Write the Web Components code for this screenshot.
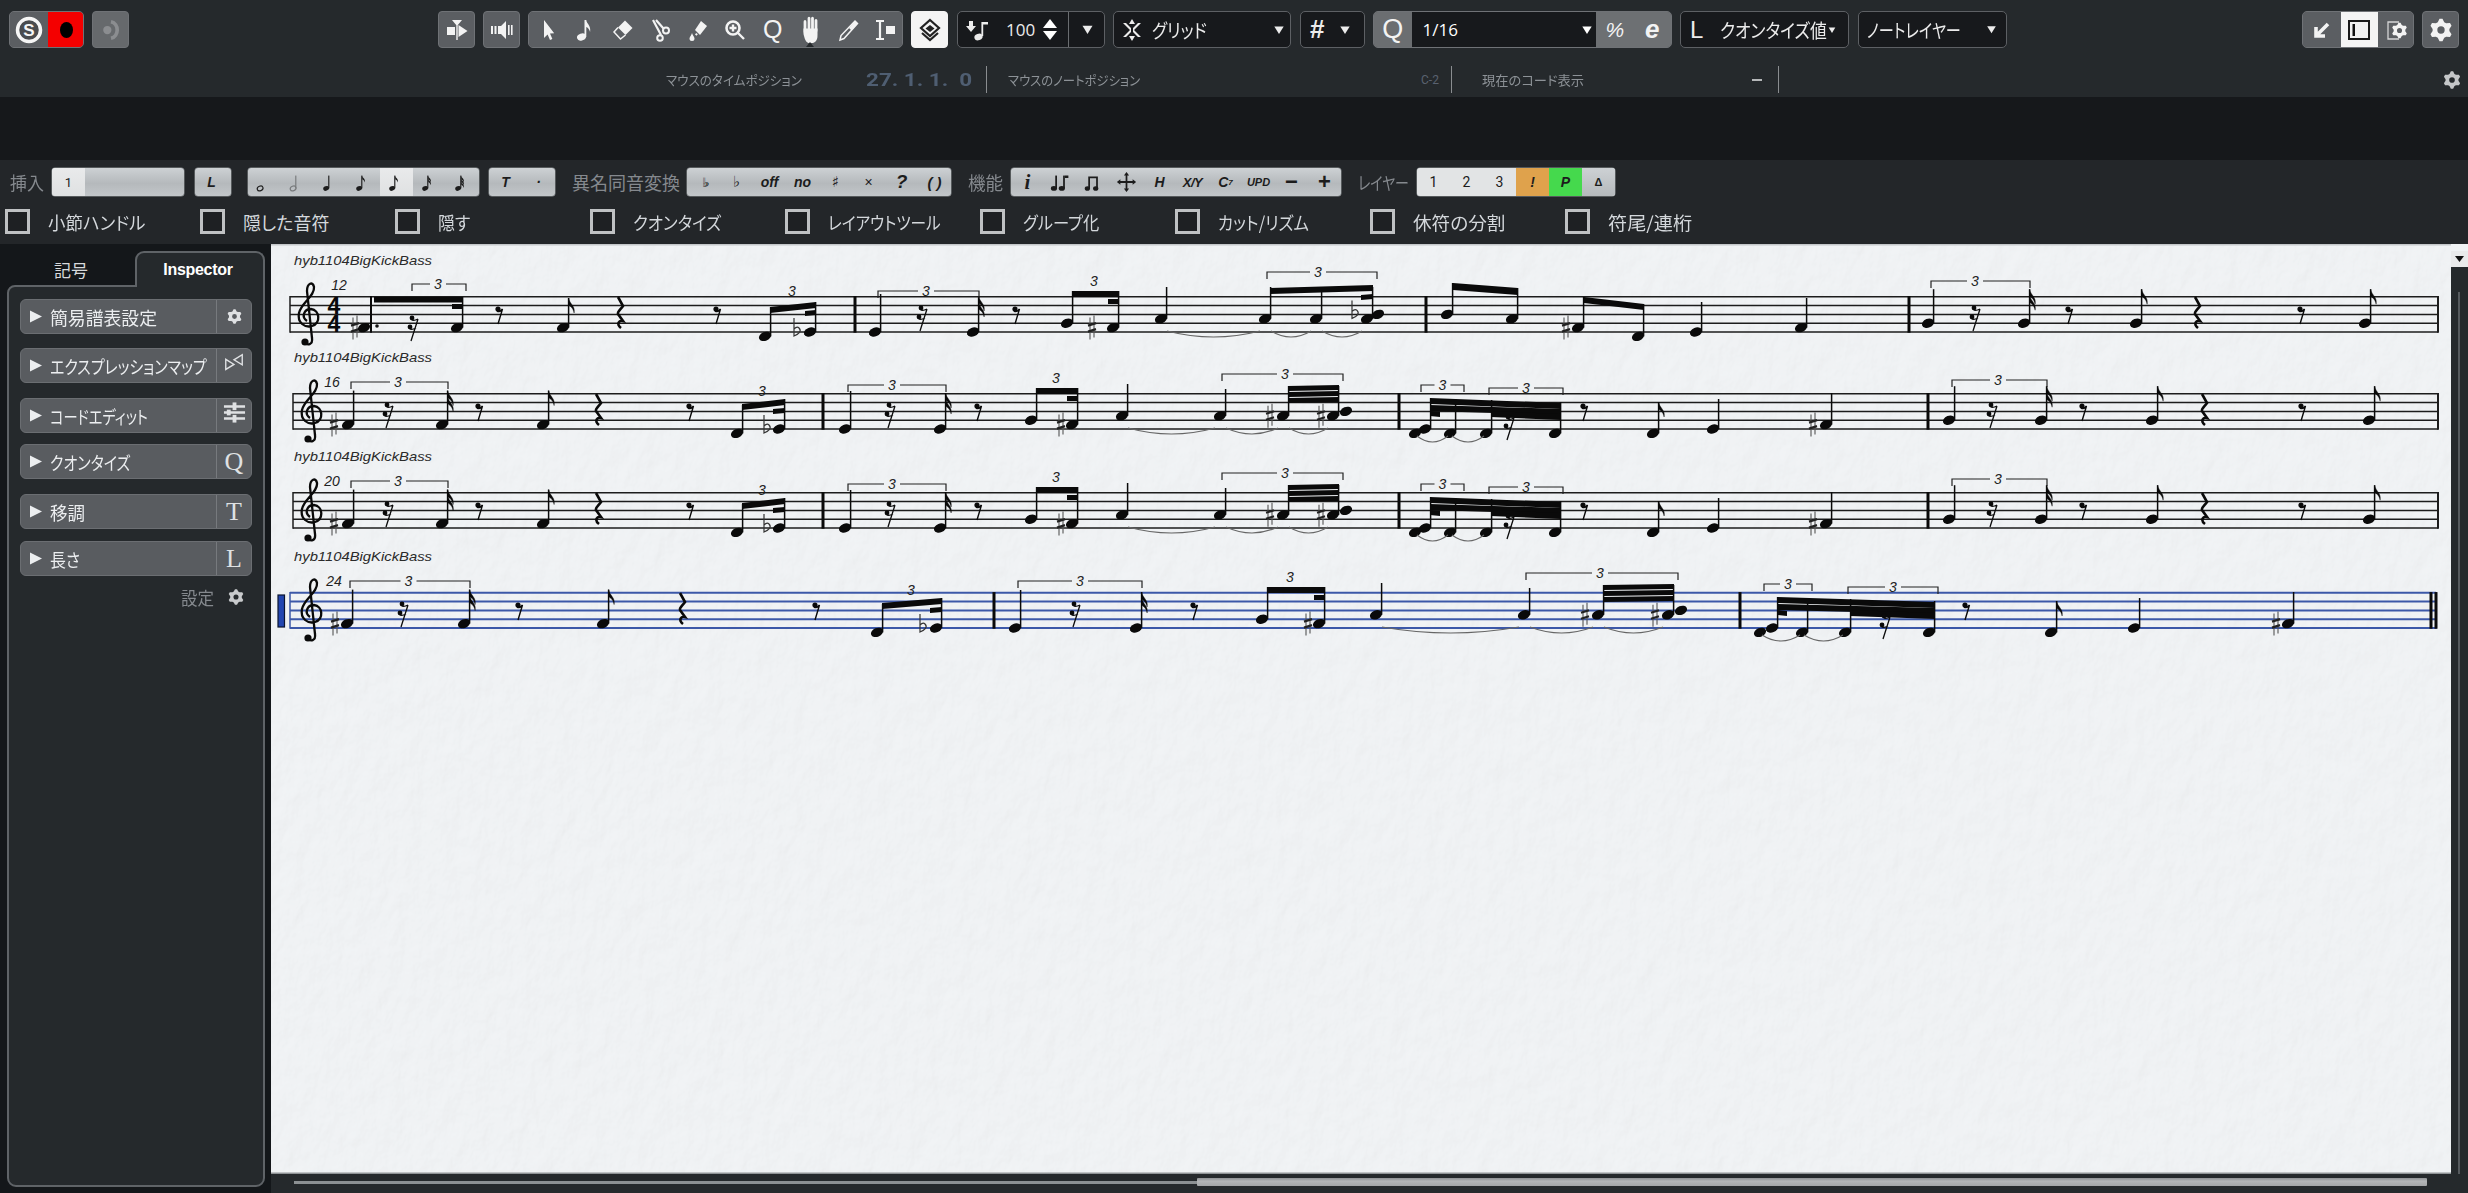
<!DOCTYPE html>
<html lang="ja"><head><meta charset="utf-8"><title>Score</title>
<style>html,body{margin:0;padding:0;background:#14171a;overflow:hidden}</style></head>
<body><score-app></score-app>
<script>
const JP='"Noto Sans CJK JP","Noto Sans",sans-serif';
const LAT='"Liberation Sans","Noto Sans CJK JP",sans-serif';
function gearPath(c,R,r,h,n=6){let d='';const N=n*4;for(let i=0;i<N;i++){const a=(i-.5)/N*2*Math.PI-Math.PI/2;const rad=(i%4<2)?R:r;d+=(i?'L':'M')+(c+rad*Math.cos(a)).toFixed(2)+' '+(c+rad*Math.sin(a)).toFixed(2);}
d+='Z M'+(c-h)+' '+c+'a'+h+' '+h+' 0 1 0 '+2*h+' 0a'+h+' '+h+' 0 1 0 '+(-2*h)+' 0Z';return d;}
const gear=`<path fill-rule="evenodd" d="${gearPath(12,10.5,7.8,3.4)}"/>`;
const noteI=(fl,filled=true,stem=true)=>{let s=`<ellipse cx="7" cy="19" rx="3.4" ry="2.5" transform="rotate(-20 7 19)" ${filled?'':'fill="none" stroke="currentColor" stroke-width="1.3"'}/>`;if(stem)s+=`<rect x="9.4" y="5" width="1.3" height="14"/>`;for(let i=0;i<fl;i++)s+=`<path d="M10.5 ${5+i*3}c.5 3 4 3.5 3 7.5c-.6-2.5-2-3-3-3.6z"/>`;return s;};
const ICONS={
 pointer:'<path d="M8 2v18l3.6-3.6L14 22l2.4-1-2.4-5.4 4.2-.3z"/>',
 note:'<ellipse cx="8.5" cy="19" rx="4.6" ry="3.4" transform="rotate(-20 8.5 19)"/><path d="M11.5 2h1.8c.4 4 5 5.5 3.8 12-.8-3-2.6-4.5-3.8-5v10h-1.8z"/>',
 eraser:'<path d="M14 2.5l7.5 7.5-7 7-7.500-7.500z"/><path d="M7 9.500l-4 4.500 6.500 7 5-4" fill="none" stroke="currentColor" stroke-width="1.500"/>',
 scissors:'<circle cx="18" cy="12.500" r="3" fill="none" stroke="currentColor" stroke-width="2"/><circle cx="12" cy="20" r="2.800" fill="none" stroke="currentColor" stroke-width="2"/><path d="M5 2l8 15M15.500 10.500 8 2" fill="none" stroke="currentColor" stroke-width="2.200"/>',
 glue:'<path d="M15 3l6 5-7 9-5-5z"/><path d="M6 15c-1 3-2.500 4-2.500 5.500a2.500 2.500 0 0 0 5 0C8.500 19 7 18 6 15z"/><rect x="9.500" y="15" width="2" height="2" transform="rotate(40 10 16)"/>',
 zoom:'<circle cx="10" cy="10" r="6.500" fill="none" stroke="currentColor" stroke-width="2.600"/><path d="M10 6.500v7M6.500 10h7M15 15l6 6" stroke="currentColor" stroke-width="2.400" fill="none"/>',
 hand:'<path d="M7 5v9M11 2v9M14.500 2v9M18 4v9" stroke="currentColor" stroke-width="2.800" stroke-linecap="round" fill="none"/><path d="M5.500 11h14v6c0 4-2 7-6 7h-2c-3 0-4.500-2-6-8z"/>',
 pencil:'<path d="M19 3l2.500 2.500L8 20.500 4 22l1-4.500z" fill="none" stroke="currentColor" stroke-width="1.500"/><path d="M19 3l2.500 2.500-6 7-2.500-2.500z"/>',
 ibar:'<path d="M3 3h8M3 21h8M7 3v18" stroke="currentColor" stroke-width="2.200" fill="none"/><rect x="13" y="8" width="9" height="8"/>',
 layers:'<path d="M12 2l9 8-9 8-9-8z" fill="none" stroke="currentColor" stroke-width="2.200"/><path d="M12 7l4.500 3.500-4.500 3.500-4.500-3.500z"/><path d="M4 15l8 7 8-7" fill="none" stroke="currentColor" stroke-width="2.200"/>',
 thru:'<path d="M7 2h10L12 8zM11.300 6h1.400v16h-1.400z"/><rect x="2" y="9" width="8" height="8"/><path d="M13.500 7l9 6-9 6z"/>',
 speak:'<rect x="1" y="8" width="2" height="8"/><rect x="4.500" y="8" width="2" height="8"/><path d="M8 8h3l5-5v18l-5-5H8z"/><rect x="18" y="7" width="1.600" height="10"/><rect x="21" y="7" width="1.600" height="10"/>',
 mon:'<circle cx="8" cy="12" r="4.500"/><path d="M12 3c9 2 9 16 0 18" fill="none" stroke="currentColor" stroke-width="4"/>',
 ins:'<path d="M3 3h4v5h3l-5 6-5-6h3z"/><ellipse cx="12.500" cy="19" rx="4.200" ry="3.200" transform="rotate(-20 12.500 19)"/><rect x="15.400" y="4" width="1.800" height="14"/><path d="M17 4h5v2.500h-5z"/>',
 grid:'<path d="M3 5l7 7-7 7 3 0 5-5v-4L6 5zM21 5l-7 7 7 7-3 0-5-5v-4l5-5z" /><path d="M12 1l3 5h-6zM12 23l-3-5h6z"/>',
 back:'<path d="M18 6L7 17M6 9v9h9" fill="none" stroke="currentColor" stroke-width="3.600"/>',
 panel:'<rect x="2" y="3" width="20" height="18" fill="#f2f2f2" stroke="#1a1a1a" stroke-width="2"/><rect x="5.500" y="6" width="2.500" height="12" fill="#111"/>',
 docgear:`<path d="M14 4H3v17h11" fill="none" stroke="currentColor" stroke-width="1.300" opacity=".8"/><g transform="translate(5.500 3.500) scale(.75)">${gear}</g>`,
 gear,
 tie:'<path d="M3 8v11l9-5.500zM21 3v11l-9-5.500z" fill="none" stroke="currentColor" stroke-width="1.500"/>',
 sliders:'<path d="M1 4.500h22v2.600H1zM1 10.700h22v2.600H1zM1 16.900h22v2.600H1z"/><rect x="10" y="1.500" width="4" height="8" /><rect x="10" y="14.500" width="4" height="8"/><rect x="4" y="9" width="4" height="6"/>',
 move:'<path d="M12 1l3 4h-2v6h6V9l4 3-4 3v-2h-6v6h2l-3 4-3-4h2v-6H5v2l-4-3 4-3v2h6V5H9z"/>',
 nn2:'<rect x="6" y="5" width="2" height="14"/><ellipse cx="4.500" cy="19" rx="3.500" ry="2.600"/><rect x="15" y="5" width="2" height="14"/><path d="M17 5h4v2.500h-4z"/><ellipse cx="13.500" cy="19" rx="3.500" ry="2.600"/>',
 nn3:'<path d="M6 6h11v2H8v11H6zM15 6h2v13h-2z"/><ellipse cx="5" cy="19" rx="3" ry="2.500"/><ellipse cx="14.500" cy="19" rx="3" ry="2.500"/>',
 n0:noteI(0,false,false),n1:noteI(0,false),n2:noteI(0),n3:noteI(1),n4:noteI(2),n5:noteI(3),n6:noteI(4),
 tri:'<path d="M0 1l24 11L0 23z"/>',
 down:'<path d="M4 6h16l-8 13z"/>'
};
const fits=new Set();
class FitT extends HTMLElement{
 connectedCallback(){if(!this.shadowRoot){const r=this.attachShadow({mode:'open'});r.innerHTML=`<style>:host{display:inline-block;white-space:nowrap;line-height:1;vertical-align:middle;font-feature-settings:"palt"}span{display:inline-block;transform-origin:left center}</style><span><slot></slot></span>`;}fits.add(this);this.fit();}
 fit(){const s=this.shadowRoot.querySelector('span');s.style.transform='';const w=+this.getAttribute('w');this.style.width=w+'px';const n=s.offsetWidth;if(n>0)s.style.transform=`scaleX(${w/n})`;}
}
customElements.define('fit-t',FitT);
function def(tag,css,html){customElements.define(tag,class extends HTMLElement{connectedCallback(){if(this.shadowRoot)return;const r=this.attachShadow({mode:'open'});r.innerHTML=`<style>${css}</style>`+(typeof html==='function'?html(this):html);}});}
def('ui-icon',':host{display:inline-flex;line-height:0}svg{fill:currentColor;display:block}',e=>{const s=e.getAttribute('s')||24;const h=e.getAttribute('h')||s;return `<svg width="${s}" height="${h}" viewBox="0 0 24 24" preserveAspectRatio="none">${ICONS[e.getAttribute('n')]}</svg>`});
def('tb-btn',`:host{display:inline-flex;align-items:center;justify-content:center;box-sizing:border-box;width:37px;height:37px;background:#5b5e62;color:#f3f3f3;border:1px solid #6f7276;border-radius:4px;font:400 25px ${LAT};flex:none;position:relative}
 :host([v=white]){background:#f4f4f4;color:#222;border-color:#f4f4f4}:host([v=red]){background:#f40000;color:#000;border-color:#f40000}:host([g]){border:0;border-radius:0;width:37.500px;height:35px}:host([v=mute]){color:#8b8d90}
 :host([notch])::after{content:"";position:absolute;left:50%;bottom:0;margin-left:-4px;border:4px solid transparent;border-top:0;border-bottom:5px solid #25292c}`,'<slot></slot>');
def('tb-group',':host{display:inline-flex;box-sizing:border-box;height:37px;border:1px solid #6f7276;border-radius:5px;overflow:hidden;background:#5b5e62;flex:none;position:relative}','<slot></slot>');
def('tb-sel',`:host{display:inline-flex;align-items:center;box-sizing:border-box;height:37px;background:#17191c;color:#ececec;border:1px solid #5d6064;border-radius:5px;font:400 19px ${JP};flex:none;position:relative}`,'<slot></slot>');
def('tool-cell',`:host{display:inline-flex;align-items:center;justify-content:center;width:33px;height:28px;color:#1c1c1c;font:italic 700 14px ${LAT};flex:none}
 :host([v=hi]){background:linear-gradient(#e9eaeb,#dfe1e2)}:host([v=or]){background:#dfa24c}:host([v=gr]){background:#45d94d}`,'<slot></slot>');
def('tool-group',':host{display:inline-flex;height:28px;border-radius:3px;overflow:hidden;background:linear-gradient(#cdd1d4,#b5b9bc 55%,#c2c6c9);box-shadow:0 0 0 .5px #8a8d90;flex:none}','<slot></slot>');
def('chk-item',`:host{display:flex;align-items:center;color:#d4d8dc;font:400 18px ${JP}}i{box-sizing:border-box;width:25px;height:25px;border:3px solid #bfc1c3;background:#1e2023;margin-right:18px;flex:none}`,'<i></i><slot></slot>');
def('insp-item',`:host{display:flex;align-items:center;box-sizing:border-box;width:232px;height:35px;background:#595c60;border:1px solid #6b6e72;border-radius:6px;color:#eceef0;font:400 18px ${JP};flex:none}
 .t{display:flex;width:12px;margin:0 8px 0 9px}.l{flex:1;min-width:0;white-space:nowrap;display:flex;align-items:center;height:100%}.r{box-sizing:border-box;width:35px;height:100%;border-left:1px solid #777a7e;display:flex;align-items:center;justify-content:center;font:400 26px "Liberation Serif",serif;color:#dfe1e3}`,`<span class="t"><ui-icon n="tri" s="12" h="13"></ui-icon></span><span class="l"><slot></slot></span><span class="r"><slot name="r"></slot></span>`);

def('top-bar',`:host{display:flex;align-items:flex-start;box-sizing:border-box;height:66px;padding:11px 0 0 9px;background:#25292c;color:#fff}
 .m{margin-left:8px}tb-sel{padding-left:0}.w{font:400 22px ${LAT}}`,`
 <tb-group style="width:75px"><tb-btn g style="color:#fff;width:38px"><ui-icon-s></ui-icon-s></tb-btn><tb-btn g v="red" style="width:37px"><svg width="15" height="22" viewBox="0 0 14 22"><ellipse cx="7" cy="11" rx="6.500" ry="8"/></svg></tb-btn></tb-group>
 <tb-btn v="mute" class="m" style="background:#66696c"><ui-icon n="mon" s="22"></ui-icon></tb-btn>
 <tb-btn style="margin-left:309px"><ui-icon n="thru"></ui-icon></tb-btn>
 <tb-btn class="m"><ui-icon n="speak"></ui-icon></tb-btn>
 <tb-group class="m" style="width:375px">
  <tb-btn g><ui-icon n="pointer"></ui-icon></tb-btn><tb-btn g><ui-icon n="note"></ui-icon></tb-btn><tb-btn g><ui-icon n="eraser"></ui-icon></tb-btn><tb-btn g><ui-icon n="scissors"></ui-icon></tb-btn><tb-btn g><ui-icon n="glue"></ui-icon></tb-btn><tb-btn g><ui-icon n="zoom"></ui-icon></tb-btn><tb-btn g>Q</tb-btn><tb-btn g notch><ui-icon n="hand" s="24" h="27"></ui-icon></tb-btn><tb-btn g><ui-icon n="pencil"></ui-icon></tb-btn><tb-btn g><ui-icon n="ibar"></ui-icon></tb-btn>
 </tb-group>
 <tb-btn v="white" class="m"><ui-icon n="layers"></ui-icon></tb-btn>
 <tb-sel style="width:148px;margin-left:9px"><ui-icon n="ins" s="24" style="margin-left:8px"></ui-icon><span style="font:400 17px 'Open Sans',sans-serif;margin-left:16px;width:30px">100</span><span style="margin-left:7px;display:flex;flex-direction:column;gap:3px"><svg width="14" height="9" viewBox="0 0 14 9" fill="#fff"><path d="M7 0l7 9H0z"/></svg><svg width="14" height="9" viewBox="0 0 14 9" fill="#fff"><path d="M7 9L0 0h14z"/></svg></span><span style="margin-left:11px;width:1px;height:35px;background:#6a6d70"></span><ui-icon n="down" s="15" style="margin-left:11px"></ui-icon></tb-sel>
 <tb-sel class="m" style="width:178px"><ui-icon n="grid" s="24" style="margin-left:6px"></ui-icon><fit-t w="55" style="margin-left:8px">グリッド</fit-t><ui-icon n="down" s="14" style="margin-left:65px"></ui-icon></tb-sel>
 <tb-sel style="width:65px;margin-left:9px"><span class="w" style="margin-left:9px;font:700 26px 'Liberation Sans',sans-serif;width:25px">#</span><ui-icon n="down" s="14" style="margin-left:3px"></ui-icon></tb-sel>
 <tb-group class="m" style="width:299px;background:#5b5e62"><tb-btn g style="background:#6b6e71;font-size:27px">Q</tb-btn><span style="flex:1;background:#17191c;display:flex;align-items:center;font:400 17px 'Open Sans',sans-serif"><span style="margin-left:11px;width:157px">1/16</span><ui-icon n="down" s="14"></ui-icon></span><tb-btn g style="background:#6d7073;font:italic 400 21px 'Liberation Sans',sans-serif">%</tb-btn><tb-btn g style="background:#6d7073;font:italic 700 26px 'Liberation Sans',sans-serif">e</tb-btn></tb-group>
 <tb-sel class="m" style="width:169px"><span class="w" style="margin-left:9px;width:30px;font-size:24px">L</span><fit-t w="107">クオンタイズ値</fit-t><ui-icon n="down" s="10"></ui-icon></tb-sel>
 <tb-sel style="width:149px;margin-left:9px"><fit-t w="94" style="margin-left:8px">ノートレイヤー</fit-t><ui-icon n="down" s="13" style="margin-left:24px"></ui-icon></tb-sel>
 <tb-group style="width:112px;margin-left:295px"><tb-btn g><ui-icon n="back"></ui-icon></tb-btn><tb-btn g v="white"><ui-icon n="panel"></ui-icon></tb-btn><tb-btn g><ui-icon n="docgear"></ui-icon></tb-btn></tb-group>
 <tb-btn class="m"><ui-icon n="gear" s="26"></ui-icon></tb-btn>`);
def('ui-icon-s',':host{display:inline-flex}',`<svg width="28" height="28" viewBox="0 0 28 28"><circle cx="14" cy="14" r="11.500" fill="#4a4c4f" stroke="#f6f6f6" stroke-width="3.500"/><text x="14" y="20" text-anchor="middle" font-family="Liberation Sans" font-weight="700" font-size="17" fill="#f6f6f6">S</text></svg>`);
def('info-bar',`:host{display:flex;align-items:center;box-sizing:border-box;height:31px;padding:0 6px 4px 0;background:#25292c;color:#8d9297;font:400 13px ${JP}}
 fit-t.v{font:700 18px "Roboto",sans-serif;color:#4f5e72;white-space:pre}b{font:400 12px Roboto,sans-serif;color:#5a6270;flex:none;width:22px}i{width:1px;height:27px;background:#8a8d90;flex:none;display:block}`,`
 <fit-t w="136" style="margin-left:666px">マウスのタイムポジション</fit-t><fit-t class="v" w="106" style="margin-left:64px;white-space:pre">27. 1. 1.  0</fit-t><i style="margin-left:14px"></i>
 <fit-t w="132" style="margin-left:21px">マウスのノートポジション</fit-t><b style="margin-left:281px">C-2</b><i style="margin-left:8px"></i>
 <fit-t w="102" style="margin-left:30px">現在のコード表示</fit-t><span style="margin-left:168px;width:10px;height:2px;background:#b5b7b9"></span><i style="margin-left:16px"></i>
 <ui-icon n="gear" s="20" style="margin-left:auto;color:#c4c6c8"></ui-icon>`);
const C=(s,v='')=>`<tool-cell ${v}>${s}</tool-cell>`;
const I=n=>`<ui-icon n="${n}" s="21" h="22"></ui-icon>`;
const sym=(s,x='')=>`<span style="font:400 15px 'DejaVu Sans',sans-serif;${x}">${s}</span>`;
def('tools-row',`:host{display:flex;align-items:flex-start;box-sizing:border-box;height:45px;padding-top:8px;background:#232629;color:#85898e;font:400 18px ${JP}}fit-t{line-height:28px;height:28px}`,`
 <fit-t w="34" style="margin-left:10px">挿入</fit-t>
 <tool-group style="margin-left:8px;width:132px">${C('<span style="font:400 13px Roboto">1</span>','v=hi')}</tool-group>
 <tool-group style="margin-left:11px;width:36px">${C('L')}</tool-group>
 <tool-group style="margin-left:17px">${C(I('n0'))}${C('<span style="color:#77797b;display:inline-flex">'+I('n1')+'</span>')}${C(I('n2'))}${C(I('n3'))}${C(I('n3'),'v=hi')}${C(I('n4'))}${C(I('n5'))}</tool-group>
 <tool-group style="margin-left:10px">${C('T')}${C('·')}</tool-group>
 <fit-t w="108" style="margin-left:17px">異名同音変換</fit-t>
 <tool-group style="margin-left:7px">${C(sym('♭♭','letter-spacing:-5px;font-size:13px'))}${C(sym('♭'))}${C('off')}${C('no')}${C(sym('♯'))}${C('<span style="font-style:normal;font-weight:400">×</span>')}${C('<span style="font-size:19px">?</span>')}${C('<span style="font-size:15px">( )</span>')}</tool-group>
 <fit-t w="35" style="margin-left:17px">機能</fit-t>
 <tool-group style="margin-left:8px">${C('<span style="font:italic 700 21px \'Liberation Serif\',serif">i</span>')}${C(I('nn2'))}${C(I('nn3'))}${C(I('move'))}${C('H')}${C('<span style="letter-spacing:-.5px;font-size:13px">X/Y</span>')}${C('C<sup style="font-size:8px">7</sup>')}${C('<span style="font-size:11px">UPD</span>')}${C('<span style="font-size:22px;font-style:normal">−</span>')}${C('<span style="font-size:22px;font-style:normal">+</span>')}</tool-group>
 <fit-t w="51" style="margin-left:17px">レイヤー</fit-t>
 <tool-group style="margin-left:8px;background:#e2e4e5">${C('<span style="font:400 14px Roboto">1</span>')}${C('<span style="font:400 14px Roboto">2</span>')}${C('<span style="font:400 14px Roboto">3</span>')}${C('!','v=or')}${C('P','v=gr')}${C('<span style="font-style:normal;font-size:11px">Δ</span>','style="background:linear-gradient(#cdd1d4,#b5b9bc)"')}</tool-group>`);
const CK=[['小節ハンドル',97],['隠した音符',86],['隠す',32],['クオンタイズ',88],['レイアウトツール',113],['グループ化',76],['カット/リズム',91],['休符の分割',92],['符尾/連桁',84]];
def('check-row',`:host{display:grid;grid-template-columns:repeat(9,195px);box-sizing:border-box;height:39px;padding:4px 0 0 5px;background:#232629;align-items:start}`,CK.map(c=>`<chk-item><fit-t w="${c[1]}">${c[0]}</fit-t></chk-item>`).join(''));
const IT=[['簡易譜表設定',107,'<ui-icon n="gear" s="17"></ui-icon>',14],['エクスプレッションマップ',157,'<ui-icon n="tie" s="22"></ui-icon>',15],['コードエディット',98,'<ui-icon n="sliders" s="23"></ui-icon>',11],['クオンタイズ',80,'Q',15],['移調',35,'T',12],['長さ',30,'L',12]];
def('insp-panel',`:host{display:flex;flex-direction:column;box-sizing:border-box;width:271px;height:949px;padding:7px 6px 6px 7px;background:#14171a;color:#e8eaec}
 .tabs{display:flex;height:34px;position:relative;z-index:1}.a{width:128px;text-align:center;font:400 17px ${JP};line-height:38px;color:#d8dadc}.b{box-sizing:border-box;width:130px;height:36px;border:2px solid #5f6367;border-bottom:0;border-radius:9px 9px 0 0;background:#25292c;text-align:center;font:700 16px ${LAT};line-height:34px;letter-spacing:-.3px;color:#fff;padding-right:4px}
 .body{flex:1;box-sizing:border-box;border:2px solid #5f6367;border-radius:8px 0 9px 9px;background:#25292c;padding:12px 11px 0 11px;display:flex;flex-direction:column}
 .set{display:flex;align-items:center;justify-content:flex-end;color:#85898e;font:400 18px ${JP};padding-right:7px;gap:13px}`,`
 <div class="tabs"><div class="a">記号</div><div class="b">Inspector</div></div>
 <div class="body">${IT.map(i=>`<insp-item style="margin-bottom:${i[3]}px"><fit-t w="${i[1]}">${i[0]}</fit-t><span slot="r">${i[2]}</span></insp-item>`).join('')}
 <div class="set"><fit-t w="33">設定</fit-t><ui-icon n="gear" s="18" style="color:#c8cacc"></ui-icon></div></div>`);

function drawScore(){
 let o='';const L=8.8;
 const sys=(b)=>{const ink='#0a0a0a';
 const py=p=>b-p*4.4;
 const api={
  staff(x1,x2,c='#1c1c1c',w=1.5){for(let i=0;i<5;i++)o+=`<line x1="${x1}" x2="${x2}" y1="${b-i*L}" y2="${b-i*L}" stroke="${c}" stroke-width="${w}"/>`;o+=`<line x1="${x1}" x2="${x1}" y1="${b-4*L-.7}" y2="${b+.7}" stroke="${c}" stroke-width="1.5"/><line x1="${x2}" x2="${x2}" y1="${b-4*L-.7}" y2="${b+.7}" stroke="${c}" stroke-width="2"/>`;},
  head(x,p){o+=`<ellipse cx="${x}" cy="${py(p)}" rx="6.3" ry="4.4" transform="rotate(-22 ${x} ${py(p)})" fill="${ink}"/>`;},
  note(x,p,up,fl=0){api.head(x,p);const s=x+5.6,t=b-up;o+=`<line x1="${s}" x2="${s}" y1="${py(p)}" y2="${t}" stroke="${ink}" stroke-width="1.5"/>`;for(let i=0;i<fl;i++)o+=`<path d="M${s} ${t+i*6}c1 6 7 8 5.5 15c-1-5-3-6-5.5-8z" fill="${ink}" stroke="${ink}" stroke-width=".4"/>`;},
  r8(x){o+=`<circle cx="${x-2}" cy="${b-23}" r="2.6" fill="${ink}"/><path d="M${x-3} ${b-21}c2 1 4 0 5.5-2L${x-2} ${b-8}" fill="none" stroke="${ink}" stroke-width="1.4"/>`;},
  r16(x,dy=0){const y=b+dy;o+=`<circle cx="${x-3}" cy="${y-24}" r="2.4" fill="${ink}"/><circle cx="${x-5}" cy="${y-15}" r="2.4" fill="${ink}"/><path d="M${x+3} ${y-23}L${x-4} ${y-1}M${x-3} ${y-22}c2 1 4 0 6-1M${x-5} ${y-13}c2 1 4 0 6-1" fill="none" stroke="${ink}" stroke-width="1.3"/>`;},
  qr(x){o+=`<path d="M${x-2} ${b-35}L${x+3} ${b-26}C${x+1} ${b-23} ${x-3} ${b-20} ${x-2} ${b-18}L${x+3} ${b-11}C${x-1} ${b-12} ${x-4} ${b-8} ${x+1} ${b-4}" fill="none" stroke="${ink}" stroke-width="2.6"/>`;},
  sh(x,p){const y=py(p);o+=`<path d="M${x-2} ${y-10}v22M${x+2} ${y-12}v22" stroke="#555" stroke-width="1.1" fill="none"/><path d="M${x-4} ${y-2}l8-2.5M${x-4} ${y+4}l8-2.5" stroke="#222" stroke-width="2.2" fill="none"/>`;},
  fl(x,p){const y=py(p);o+=`<path d="M${x-3} ${y-14}v18c5-2 8-5 5-8c-1-1-3-1-5 1" stroke="#333" stroke-width="1.2" fill="none"/>`;},
  br(x1,x2,y,tx){const g=8;o+=`<path d="M${x1} ${y+7}V${y}H${tx-g}M${tx+g} ${y}H${x2}V${y+7}" fill="none" stroke="#222" stroke-width="1.2"/>`;api.three(tx,y+5);},
  three(x,y){o+=`<text x="${x}" y="${y}" text-anchor="middle" font-family="Liberation Sans" font-style="italic" font-size="14" fill="#222">3</text>`;},
  beam(x1,y1,x2,y2,t=6){o+=`<polygon points="${x1},${y1} ${x2},${y2} ${x2},${y2+t} ${x1},${y1+t}" fill="${ink}"/>`;},
  bar(x,w=3){o+=`<rect x="${x-w/2}" y="${b-4*L-.7}" width="${w}" height="${4*L+1.4}" fill="${ink}"/>`;},
  tie(x1,x2,y){const m=(x1+x2)/2;o+=`<path d="M${x1} ${y}Q${m} ${y+12} ${x2} ${y}" fill="none" stroke="#666" stroke-width="1.1"/>`;},
  clef(x){o+=`<path d="M${x-3} ${b+10}c2 4 8 3 7-4L${x-1} ${b-41}c0-8 6-10 7-4c1 9-13 16-15 26c-2 10 6 15 13 13c9-3 8-16-1-17c-7 0-10 8-4 12" fill="none" stroke="${ink}" stroke-width="2.3"/><circle cx="${x-3}" cy="${b+10}" r="3.6" fill="${ink}"/>`;},
  num(x,t){o+=`<text x="${x}" y="${b-42}" text-anchor="middle" font-family="Liberation Sans" font-style="italic" font-size="14" fill="#222">${t}</text>`;},
  label(){o+=`<text x="294" y="${b-67}" textLength="138" lengthAdjust="spacingAndGlyphs" font-family="Liberation Sans" font-style="italic" font-size="13" fill="#2a2a2a">hyb1104BigKickBass</text>`;}
 };return api;};
 const barA=(S,a)=>{const up=a.p*4.4+34,p=a.p;if(a.s)S.sh(a.s,p);S.note(a.n1,p,up);S.r16(a.r);S.note(a.n2,p,up,2);S.br(a.n1+3,a.n2+6,a.by,(a.n1+a.n2)/2+(a.t3||3));S.r8(a.ra);S.note(a.n3,p,up,1);S.qr(a.q);S.r8(a.rb);
  if(a.n5){S.note(a.n4,-1,24);S.note(a.n5,0,30);S.fl(a.fx,0);S.beam(a.n4+5,a.B-25,a.n5+6,a.B-30,6);S.beam(a.n5-6,a.B-20,a.n5+6,a.B-21,5);S.three(a.tx,a.B-33);}else{S.note(a.n4,p,up,1);}};
 const barB=(S,B,a)=>{S.note(a.n1,0,38);S.r16(a.r);S.note(a.n2,0,36,2);S.br(a.n1+3,a.n2+6,B-a.by,a.bt);S.r8(a.ra);
  S.note(a.n3,2,41);S.note(a.n4,1,41);S.sh(a.s,1);S.beam(a.n3+5,B-41,a.n4+6,B-41,6);S.beam(a.n4-5,B-33,a.n4+6,B-33,5);S.three(a.t,B-46);
  S.note(a.c1,3,45);S.head(a.c5,4);
  if(a.thick){S.note(a.c2,3,40);S.note(a.c3,3,43);S.note(a.c4,3,43);S.sh(a.c3-13,3);S.sh(a.f,3);
   S.beam(a.c3+5,B-43,a.c4+6,B-44,5);S.beam(a.c3+5,B-37,a.c4+6,B-38,5);S.beam(a.c3+5,B-31,a.c4+6,B-32,5);}
  else{S.note(a.c2,3,45);S.note(a.c3,3,45);S.note(a.c4,3,45);S.fl(a.f,4);S.beam(a.c2+5,B-44,a.c4+6,B-47,6);S.beam(a.c4-6,B-37,a.c4+6,B-38,5);}
  S.tie(a.c1+6,a.c2-5,B-1);S.tie(a.c2+6,a.c3-5,B-1);S.tie(a.c3+6,a.c4-5,B-1);S.br(a.c2+2,a.c4+10,B-a.b2,a.c3+2);};
 const barC=(S,B,a)=>{const [n1,n2,n3,n4,n5]=a.n;const T=31;S.head(n1,-1);S.note(n2,0,T);S.note(n3,-1,T-1);S.note(n4,-1,T-2);S.note(n5,-1,T-4);
  S.beam(n2+5,B-T,n5+6,B-T+5,6);S.beam(n2+5,B-T+7,n5+6,B-T+11,6);S.beam(n4+5,B-T+13,n5+6,B-T+16,6);S.beam(n2+5,B-T+13,n2+15,B-T+14,5);
  S.tie(n1+2,n3-2,B+7);S.tie(n3+2,n4-2,B+7);S.r16(a.r,12);S.br(a.b[0],a.b[1],B-44,(a.b[0]+a.b[1])/2);S.br(a.b[2],a.b[3],B-41,(a.b[2]+a.b[3])/2);
  S.r8(a.ra);S.note(a.q1,-1,27,1);S.note(a.q2,0,30);S.sh(a.s,1);S.note(a.q3,1,36);};
 {const B=332,S=sys(B);S.label();S.staff(290,2438);S.clef(308);S.num(339,12);
  o+=`<text x="334" y="${B-18}" text-anchor="middle" font-family="Liberation Sans" font-weight="700" font-size="23" fill="#0a0a0a">4</text><text x="334" y="${B}" text-anchor="middle" font-family="Liberation Sans" font-weight="700" font-size="23" fill="#0a0a0a">4</text>`;
  S.sh(355,1);S.head(364,1);S.bar(371,2);S.beam(374,297,462,297,5.5);S.beam(452,304,462,304,5);o+=`<circle cx="377" cy="326" r="1.8" fill="#111"/>`;
  S.r16(415,10);S.note(457,1,35);S.br(412,466,284,438);S.r8(500);S.note(563,1,34,1);S.qr(620);S.r8(718);
  S.note(765,-1,25);S.note(810,0,30);S.fl(797,0);S.beam(770,307,816,302,6);S.beam(805,311,816,310,5);S.three(792,296);S.bar(855);
  barB(S,B,{n1:875,r:924,n2:973,by:41,bt:926,ra:1017,n3:1067,n4:1113,s:1092,t:1094,c1:1161,c2:1265,c3:1316,c4:1367,c5:1378,f:1355,b2:60,thick:false});
  S.bar(1426);S.note(1447,4,49);S.note(1512,3,44);S.beam(1453,283,1518,288,7);S.sh(1566,1);S.note(1578,1,35);S.note(1638,-1,28);S.beam(1584,297,1644,304,6);S.note(1696,0,30);S.note(1801,1,34);S.bar(1909);
  barA(S,{p:2,n1:1928,r:1977,n2:2024,by:281,ra:2070,n3:2136,q:2197,rb:2302,n4:2365,t3:-1});
 }
 for(const [B,num] of [[429,16],[528,20]]){const S=sys(B);S.label();S.staff(293,2438);S.clef(311);S.num(332,num);
  barA(S,{s:334,p:1,n1:348,r:390,n2:442,by:B-47,ra:480,n3:543,q:598,rb:691,n4:737,n5:779,fx:767,tx:762,B});S.bar(823);
  barB(S,B,{n1:845,r:892,n2:940,by:44,bt:892,ra:979,n3:1031,n4:1072,s:1061,t:1056,c1:1122,c2:1220,c3:1283,c4:1333,c5:1346,f:1321,b2:55,thick:true});S.bar(1399);
  barC(S,B,{n:[1415,1425,1450,1486,1555],r:1511,b:[1421,1464,1489,1563],ra:1585,q1:1653,q2:1713,s:1813,q3:1826});S.bar(1928);
  barA(S,{p:2,n1:1949,r:1994,n2:2041,by:B-49,ra:2084,n3:2152,q:2204,rb:2303,n4:2369});
 }
 {const B=628,S=sys(B);S.label();S.staff(290,2436,'#3c58a8',2);
  o+=`<rect x="278" y="595" width="6.5" height="32" fill="#2346b0" stroke="#0a1430" stroke-width="1.2"/>`;
  S.clef(311);S.num(334,24);
  barA(S,{s:335,p:1,n1:347,r:405,n2:464,by:581,ra:520,n3:603,q:682,rb:817,n4:877,n5:936,fx:923,tx:911,B});S.bar(994);
  barB(S,B,{n1:1015,r:1077,n2:1136,by:47,bt:1080,ra:1195,n3:1262,n4:1319,s:1308,t:1290,c1:1376,c2:1524,c3:1598,c4:1668,c5:1681,f:1655,b2:55,thick:true});S.bar(1740);
  barC(S,B,{n:[1760,1772,1802,1845,1929],r:1887,b:[1764,1812,1848,1938],ra:1967,q1:2051,q2:2134,s:2276,q3:2288});
  S.bar(2431,3);S.bar(2436,3);
 }
 return o;
}
def('score-sheet',`:host{display:block;width:2180px;height:930px;flex:none}svg{display:block}`,`<svg width="2180" height="930" viewBox="271 244 2180 930">
 <defs><filter id="paper" x="0" y="0" width="100%" height="100%"><feTurbulence type="fractalNoise" baseFrequency=".06 .035" numOctaves="4" seed="7" result="n"/><feDiffuseLighting in="n" surfaceScale=".9" diffuseConstant="1.03" lighting-color="#f2f4f6"><feDistantLight azimuth="60" elevation="72"/></feDiffuseLighting></filter></defs>
 <rect x="271" y="244" width="2180" height="930" fill="#f0f2f4"/><rect x="271" y="244" width="2180" height="930" filter="url(#paper)" opacity=".6"/>
 <rect x="271" y="244" width="2180" height="1.5" fill="#c4c7ca"/><rect x="271" y="1172.5" width="2180" height="1.5" fill="#8f9396"/>
 ${drawScore()}</svg>`);
def('v-scroll',`:host{display:flex;flex-direction:column;width:17px;height:930px;background:#25292c;flex:none;position:relative}
 .b{height:16px;margin-top:7px;background:#e9eaeb;display:flex;justify-content:center;align-items:center}.s{background:#f0f2f4;position:absolute;top:0;left:0;right:0;height:7px}.t{width:2px;flex:1;background:#565a5e;margin:25px 0 0 7px}`,
 `<div class="s"></div><div class="b"><svg width="9" height="6" viewBox="0 0 9 6"><path d="M0 0h9L4.500 6z" fill="#111"/></svg></div><div class="t"></div>`);
def('h-scroll',`:host{display:flex;align-items:center;box-sizing:border-box;height:19px;padding:0 41px 3px 23px;background:#25292c}.t{width:903px;height:3px;background:#8c9093}.m{flex:1;height:8px;background:linear-gradient(#8e9194,#b4b6b8 40%,#a4a6a8);border-radius:1px}`,'<div class="t"></div><div class="m"></div>');
def('score-app',`:host{display:block;width:2468px;height:1193px;background:#14171a;overflow:hidden;position:relative}
 .strip{height:63px;background:#16181b}.main{display:flex;height:949px}.col{display:flex;flex-direction:column;width:2197px}.row{display:flex}`,`
 <top-bar></top-bar><info-bar></info-bar><div class="strip"></div><tools-row></tools-row><check-row></check-row>
 <div class="main"><insp-panel></insp-panel><div class="col"><div class="row"><score-sheet></score-sheet><v-scroll></v-scroll></div><h-scroll></h-scroll></div></div>`);
for(const f of fits)f.fit();
</script></body></html>
